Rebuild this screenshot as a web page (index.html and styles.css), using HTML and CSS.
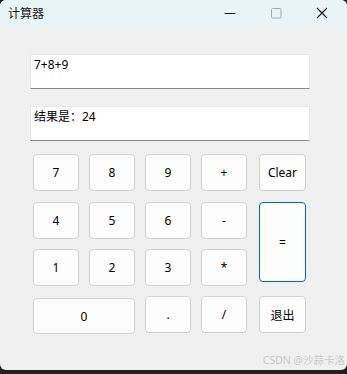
FILE: index.html
```html
<!DOCTYPE html>
<html lang="zh">
<head>
  <meta charset="UTF-8">
  <title>计算器</title>
  <link rel="stylesheet" href="styles.css">
</head>
<body>
  <div class="window">
    <div class="titlebar">
      <span class="title">计算器</span>
      <div class="controls">
        <span class="ctl min"><svg width="12" height="12" viewBox="0 0 12 12"><path d="M0.5 6.5h11" stroke="#1a1a1a" stroke-width="1.1"/></svg></span>
        <span class="ctl max"><svg width="12" height="12" viewBox="0 0 12 12"><rect x="1.5" y="1.5" width="9.5" height="9.5" rx="1" fill="none" stroke="#a8a8a8" stroke-width="1"/></svg></span>
        <span class="ctl close"><svg width="12" height="12" viewBox="0 0 12 12"><path d="M1 1l10 10M11 1L1 11" stroke="#1a1a1a" stroke-width="1.1"/></svg></span>
      </div>
    </div>

    <div class="content">
      <div class="field">7+8+9</div>
      <div class="field">结果是：24</div>

      <div class="keys">
        <button class="key">7</button>
        <button class="key">8</button>
        <button class="key">9</button>
        <button class="key">+</button>
        <button class="key side">Clear</button>

        <button class="key">4</button>
        <button class="key">5</button>
        <button class="key">6</button>
        <button class="key">-</button>
        <button class="key side equals">=</button>

        <button class="key">1</button>
        <button class="key">2</button>
        <button class="key">3</button>
        <button class="key">*</button>

        <button class="key zero">0</button>
        <button class="key">.</button>
        <button class="key">/</button>
        <button class="key side">退出</button>
      </div>
    </div>

    <div class="watermark">CSDN @沙蒜卡洛</div>
  </div>
</body>
</html>
```

FILE: styles.css
```css
* { box-sizing: border-box; margin: 0; padding: 0 }
body {
  background: #202020;
  width: 347px; height: 374px;
  overflow: hidden;
  font-family: 'Segoe UI', 'Noto Sans', 'Noto Sans CJK SC', sans-serif;
  font-size: 12px;
  color: #000;
}
.window {
  position: relative;
  width: 347px; height: 370px;
  background: #f0f0f0;
  border-radius: 6px;
  overflow: hidden;
}
.titlebar {
  height: 28px;
  background: #e9f4f7;
  display: flex; align-items: center; justify-content: space-between;
  padding-left: 8px;
}
.title {
  font-size: 12px;
  color: #1a1a1a;
  margin-top: -2px;
}
.controls {
  display: flex; align-items: center;
  height: 100%;
  margin-top: -3px;
}
.ctl {
  width: 46px; height: 100%;
  display: flex; align-items: center; justify-content: center;
}
.ctl.min { width: 50px; }
.ctl.max { width: 42px; }
.ctl.close { width: 50px; }
.content {
  padding: 26px 0 0 30px;
}
.field {
  width: 280px; height: 35px;
  background: #fff;
  border: 1px solid #e6e6e6;
  border-bottom: 1px solid #8a8a8a;
  padding: 2px 3px;
  line-height: 16px;
  margin-bottom: 17px;
}
.field + .field { margin-bottom: 0; }
.keys {
  display: grid;
  grid-template-columns: repeat(4, 46px) 49px;
  grid-template-rows: 38px 37px 37px 37px;
  column-gap: 10px;
  row-gap: 10px;
  margin: 13px 0 0 3px;
}
.key {
  height: 37px;
  background: #fdfdfd;
  border: 1px solid #d0d0d0;
  border-radius: 4px;
  font-family: inherit;
  font-size: 12px;
  color: #000;
  align-self: start;
}
.side { margin-left: 2px; width: 47px; }
.equals {
  grid-column: 5; grid-row: 2 / span 2;
  height: 80px;
  border-color: #0067c0;
  padding-top: 1px;
}
.zero {
  grid-column: 1 / span 2;
  margin-top: 2px;
  height: 36px;
}
.watermark {
  position: absolute;
  right: 2px; bottom: 3px;
  font-size: 10.5px;
  color: #c9c9c9;
  white-space: nowrap;
}
```
